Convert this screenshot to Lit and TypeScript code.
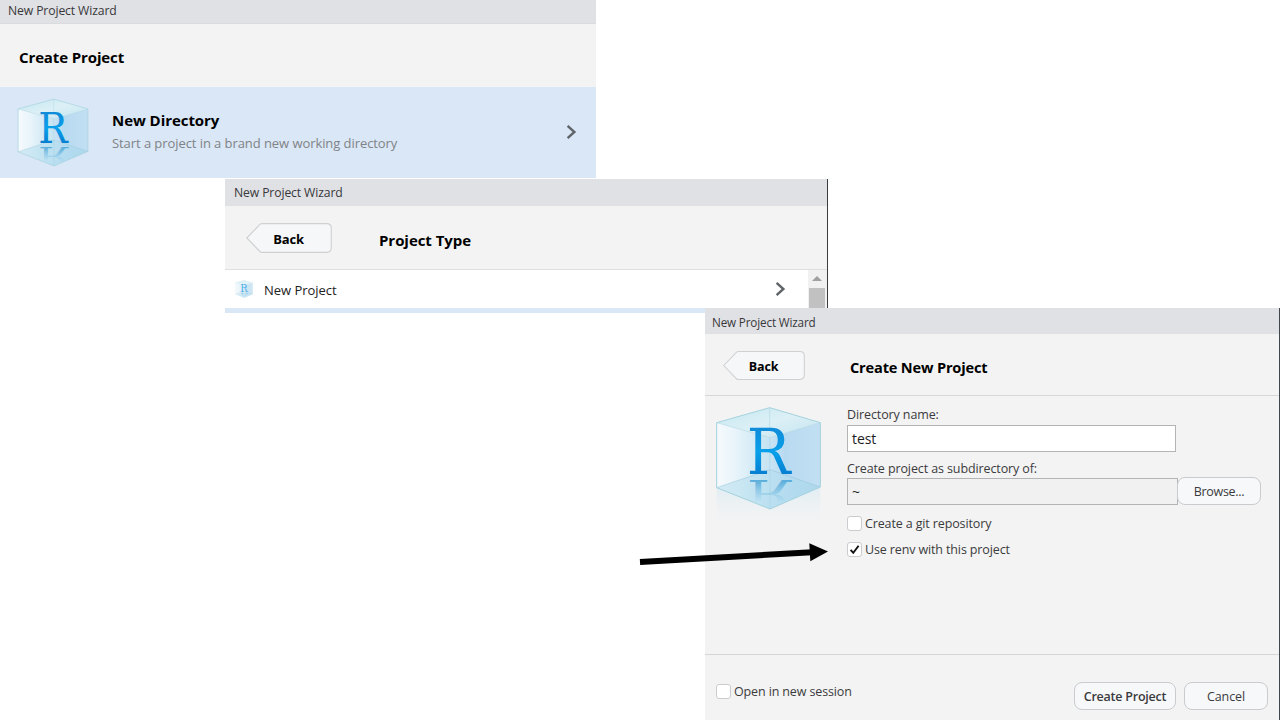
import { LitElement, html, css, svg } from "lit";
import { customElement, property } from "lit/decorators.js";

@customElement("r-cube")
class RCube extends LitElement {
  @property({ type: Boolean }) reflection = false;
  static styles = css`
    :host { display: block; }
    svg { display: block; width: 100%; height: 100%; }
    .glyph { font-family: "DejaVu Serif", serif; font-size: 193px; }
  `;
  render() {
    return html`<svg viewBox=${this.reflection ? "45 32 321 360" : "45 32 321 314"} preserveAspectRatio="none">
      <defs>
        <linearGradient id="l" x1="0" x2="1" y1="0" y2="0"><stop offset="0" stop-color="#f6fafd"/><stop offset=".35" stop-color="#e8f4fa"/><stop offset="1" stop-color="#c4e3f2"/></linearGradient>
        <linearGradient id="r" x1="0" x2="1" y1="0" y2="0"><stop offset="0" stop-color="#c9e4f4"/><stop offset=".3" stop-color="#b8daf1"/><stop offset="1" stop-color="#c2dff2"/></linearGradient>
        <linearGradient id="t" x1="0" x2="1" y1="0" y2="1"><stop offset="0" stop-color="#c6e7f0"/><stop offset=".5" stop-color="#dcf0f6"/><stop offset="1" stop-color="#c3e3ef"/></linearGradient>
        <linearGradient id="b" x1="0" x2="1" y1="0" y2="0"><stop offset="0" stop-color="#c8e6f2"/><stop offset=".5" stop-color="#b8dff0"/><stop offset="1" stop-color="#a8d5eb"/></linearGradient>
        <linearGradient id="g" x1="0" x2="0" y1="0" y2="1"><stop offset="0" stop-color="#1580cf"/><stop offset=".5" stop-color="#08a0ea"/><stop offset="1" stop-color="#0468c0"/></linearGradient>
        <linearGradient id="f" x1="0" x2="0" y1="0" y2="1"><stop offset="0" stop-color="#d4e8f3" stop-opacity=".6"/><stop offset="1" stop-color="#e8f2f7" stop-opacity="0"/></linearGradient>
        <linearGradient id="m" gradientUnits="userSpaceOnUse" x1="0" x2="0" y1="237" y2="125"><stop offset="0" stop-color="#3f9fd6" stop-opacity=".8"/><stop offset="1" stop-color="#6ab8df" stop-opacity="0"/></linearGradient>
      </defs>
      ${this.reflection ? svg`<path d="M50 277L210 341L361 275V385H50Z" fill="url(#f)"/>` : ""}
      <path d="M50 82L210 127V341L50 277Z" fill="url(#l)"/>
      <path d="M361 82L210 127V341L361 275Z" fill="url(#r)"/>
      <path d="M50 82L209 37L361 82L210 127Z" fill="url(#t)"/>
      <path d="M50 277L210 223L361 275L210 341Z" fill="url(#b)" opacity=".75"/>
      <g transform="matrix(1 0 0 -.6 0 396)"><text class="glyph" x="140" y="237" textLength="131" lengthAdjust="spacingAndGlyphs" fill="url(#m)">R</text></g>
      <path d="M209 37V100M50 82L210 127L361 82M210 127V341" fill="none" stroke="#8cc6d8" stroke-width="2" opacity=".5"/>
      <path d="M50 277L210 223L361 275" fill="none" stroke="#8cc0d6" stroke-width="2" opacity=".7"/>
      <path d="M50 82L209 37L361 82V275L210 341L50 277Z" fill="none" stroke="#a3d2de" stroke-width="3"/>
      <text class="glyph" x="140" y="237" textLength="131" lengthAdjust="spacingAndGlyphs" fill="url(#g)">R</text>
    </svg>`;
  }
}

@customElement("back-button")
class BackButton extends LitElement {
  static styles = css`
    :host { display: grid; }
    svg, span { grid-area: 1 / 1; }
    svg { width: 100%; height: 100%; }
    span { align-self: center; justify-self: center; padding: 2px 1px 0 0; font-weight: 700; color: #000; letter-spacing: -.15px; }
  `;
  render() {
    return html`<svg viewBox="0 0 86 30" preserveAspectRatio="none"><path d="M.8 15L14.5 .9Q15 .6 16 .6H80.5Q85.3 .6 85.3 5.4V24.6Q85.3 29.4 80.5 29.4H16Q15 29.4 14.5 29Z" fill="#f6f7f9" stroke="#cfd0d2" stroke-width="1.1"/></svg><span>Back</span>`;
  }
}

@customElement("app-root")
class AppRoot extends LitElement {
  static styles = css`
    :host { display: block; position: relative; width: 1280px; height: 720px; overflow: hidden; background: #fff; font-family: "Open Sans", "Noto Sans", sans-serif; font-size: 13px; line-height: 20px; color: #3b3b3d; white-space: nowrap; }
    * { box-sizing: border-box; }
    .win { position: absolute; background: #f3f3f3; display: flex; flex-direction: column; }
    .bar { background: #e0e1e5; font-size: 12.2px; letter-spacing: -.12px; color: #38383a; flex: none; }
    .head { display: flex; flex: none; align-items: center; }
    .h { font-weight: 700; font-size: 15px; color: #000; letter-spacing: -.05px; }
    .chev { display: block; width: 11px; height: 16px; flex: none; }

    .one { left: 0; top: 0; width: 596px; height: 178px; }
    .one .bar { height: 24px; padding: 1px 0 0 8px; line-height: 20px; border-bottom: 1px solid #d9dbdf; }
    .one .head { height: 63px; padding: 3px 0 0 19px; }
    .one .head .h { letter-spacing: -.12px; }
    .choice { flex: 1; display: flex; align-items: center; background: #dae7f6; padding: 0 19px 0 17px; }
    .choice r-cube { width: 72px; height: 69px; margin: 0 23px 0 0; }
    .choice .chev { margin-bottom: 1px; }
    .copy { flex: 1; display: flex; flex-direction: column; line-height: 23px; padding-bottom: 2px; }
    .sub { color: #7f8387; letter-spacing: -.07px; }

    .two { left: 225px; top: 179px; width: 603px; height: 134px; border-right: 1px solid #3a3c40; }
    .two .bar { height: 27px; padding: 4px 0 0 9px; }
    .two .head { height: 64px; padding: 3px 0 0 21px; border-bottom: 1px solid #dfdfdf; }
    .two .head .h { padding-top: 1px; }
    .two back-button { width: 86px; height: 30px; margin: 0 47px 2px 0; }
    .list { height: 38px; flex: none; display: flex; background: #fff; }
    .item { flex: 1; display: flex; align-items: center; padding: 1px 22px 0 10px; color: #222; }
    .item r-cube { width: 18px; height: 18px; margin: 0 11px 1px 0; opacity: .75; }
    .name { flex: 1; letter-spacing: -.03px; }
    .item .chev { margin-bottom: 2px; }
    .scroll { width: 19px; background: #f1f1f1; display: flex; flex-direction: column; align-items: flex-start; }
    .up { margin: 6px 0 0 4px; border: 5px solid transparent; border-top: 0; border-bottom: 5px solid #a0a0a0; }
    .thumb { margin: 7px 0 0 1px; width: 16px; flex: 1; background: #c1c1c1; }
    .next { flex: 1; background: #dae7f6; }

    .three { left: 705px; top: 308px; width: 575px; height: 412px; border-right: 1px solid #40464c; font-size: 12.5px; letter-spacing: -.11px; }
    .three .bar { height: 26px; padding: 4px 0 0 7px; font-size: 11.7px; letter-spacing: -.15px; }
    .three .head { height: 62px; padding: 0 0 0 18px; border-bottom: 1px solid #d8d8d8; }
    .three back-button { width: 82px; height: 29px; margin: 2px 45px 0 0; }
    .three .h { font-size: 14.6px; letter-spacing: -.18px; padding-top: 4px; }
    .content { flex: 1; display: flex; align-items: flex-start; padding: 10px 0 0 10px; }
    .content r-cube { width: 107px; height: 120px; margin-right: 25px; }
    .form { display: flex; flex-direction: column; width: 416px; margin-top: -1px; }
    .input { width: 329px; height: 27px; border: 1px solid #b4b4b6; background: #fff; padding: 3px 4px; font-size: 14px; color: #1d1d1f; letter-spacing: -.1px; }
    .lab2 { margin-top: 7px; }
    .pick { display: flex; margin: -1px 0 9px; }
    .pick .input { width: 331px; margin-right: -1px; background: #f1f1f1; }
    .btn { height: 28px; border: 1px solid #cacbce; border-radius: 8px; background: #f7f8fa; text-align: center; line-height: 27px; }
    .browse { width: 84px; margin-top: -1px; letter-spacing: -.28px; }
    .check { display: flex; align-items: center; gap: 3px; height: 20px; letter-spacing: -.13px; }
    .check + .check { margin-top: 6px; }
    .box { display: block; width: 15px; height: 15px; margin-bottom: 1px; border: 1px solid #cbccd0; border-radius: 3px; background: #fff; }
    .box svg { display: block; width: 13px; height: 13px; }
    .foot { height: 66px; flex: none; border-top: 1px solid #d5d5d5; display: flex; align-items: flex-start; padding: 27px 11px 0 11px; }
    .foot .check { flex: 1; }
    .create { width: 102px; font-weight: 600; letter-spacing: -.23px; }
    .cancel { width: 84px; margin-left: 8px; }
    .arrow { position: absolute; left: 636px; top: 538px; width: 196px; height: 30px; }
  `;
  chev() {
    return html`<svg class="chev" viewBox="0 0 11 16"><path d="M1.6 1.8L8.4 8L1.6 14.2" fill="none" stroke="#5f6468" stroke-width="2.4"/></svg>`;
  }
  render() {
    return html`
      <section class="win one">
        <div class="bar">New Project Wizard</div>
        <div class="head"><span class="h">Create Project</span></div>
        <div class="choice"><r-cube></r-cube><div class="copy"><span class="h">New Directory</span><span class="sub">Start a project in a brand new working directory</span></div>${this.chev()}</div>
      </section>
      <section class="win two">
        <div class="bar">New Project Wizard</div>
        <div class="head"><back-button></back-button><span class="h">Project Type</span></div>
        <div class="list">
          <div class="item"><r-cube></r-cube><span class="name">New Project</span>${this.chev()}</div>
          <div class="scroll"><div class="up"></div><div class="thumb"></div></div>
        </div>
        <div class="next"></div>
      </section>
      <section class="win three">
        <div class="bar">New Project Wizard</div>
        <div class="head"><back-button></back-button><span class="h">Create New Project</span></div>
        <div class="content">
          <r-cube reflection></r-cube>
          <div class="form">
            <span>Directory name:</span>
            <div class="input">test</div>
            <span class="lab2">Create project as subdirectory of:</span>
            <div class="pick"><div class="input">~</div><div class="btn browse">Browse...</div></div>
            <div class="check"><i class="box"></i><span>Create a git repository</span></div>
            <div class="check"><i class="box"><svg viewBox="0 0 13 13"><path d="M2.6 6.8L5.3 9.8L10.6 2.8" fill="none" stroke="#111" stroke-width="1.9"/></svg></i><span>Use renv with this project</span></div>
          </div>
        </div>
        <div class="foot">
          <div class="check"><i class="box"></i><span>Open in new session</span></div>
          <div class="btn create">Create Project</div>
          <div class="btn cancel">Cancel</div>
        </div>
      </section>
      <svg class="arrow" viewBox="636 538 196 30"><path d="M640 562L812 552.2" stroke="#000" stroke-width="6"/><path d="M809.3 543.2L828 551.5L810.3 561.2Z"/></svg>`;
  }
}
